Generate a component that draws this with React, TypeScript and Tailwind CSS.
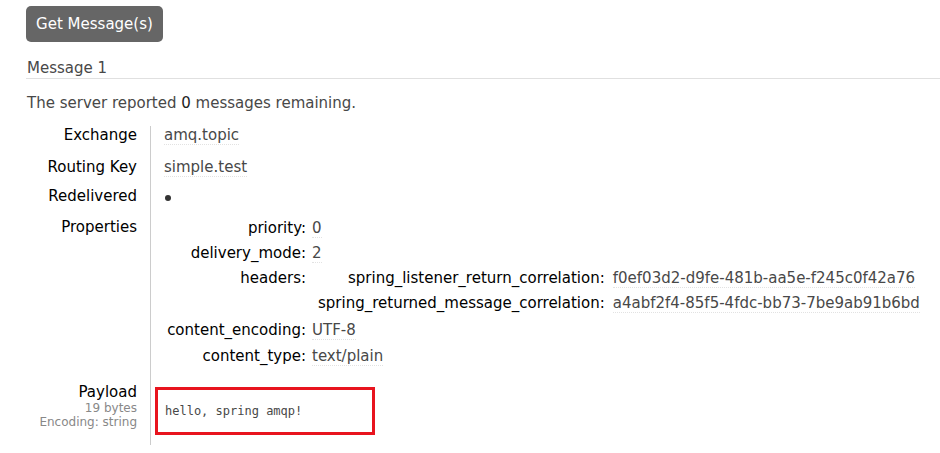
const font = "font-['DejaVu_Sans',Verdana,sans-serif]";

function Val({ children }: { children: React.ReactNode }) {
  return <span className="border-b border-dotted border-[#e2e2e2] text-[#484848]">{children}</span>;
}

export default function App() {
  return (
    <div className={`${font} min-h-[453px] w-[940px] bg-white pl-[26px] text-[15px] leading-[18px] text-[#484848]`}>
      <div className="pt-[6px]">
        <button className="h-[36px] w-[137px] rounded-[5px] bg-[#666] text-[15px] text-white">
          Get Message(s)
        </button>
      </div>
      <div className="mt-[17px] border-b border-[#e0e0e0] pb-px pl-px">Message 1</div>
      <p className="mt-[15px] pl-px">
        The server reported <span className="text-[#222]">0</span> messages remaining.
      </p>
      <div className="mt-[14px] grid grid-cols-[124px_1fr]">
        <div className="flex flex-col items-end pr-[13px] text-black">
          <div className="h-[32px]">Exchange</div>
          <div className="h-[29px]">Routing Key</div>
          <div className="h-[31px]">Redelivered</div>
          <div className="h-[165px]">Properties</div>
          <div>Payload</div>
          <div className="text-[12px] leading-[14px] text-[#888]">19 bytes</div>
          <div className="text-[12px] leading-[14px] text-[#888]">Encoding: string</div>
        </div>
        <div className="border-l border-[#ccc] pb-[10px] pl-[13px]">
          <div className="h-[32px]"><Val>amq.topic</Val></div>
          <div className="h-[29px]"><Val>simple.test</Val></div>
          <div className="flex h-[31px] items-center pb-[9px] pl-[1px]">
            <span className="h-[6px] w-[6px] rounded-full bg-[#333]" />
          </div>
          <div className="grid h-[165px] grid-cols-[142px_1fr] content-start gap-x-[6px] gap-y-[7px] pt-px">
            <div className="text-right text-black">priority:</div>
            <div><Val>0</Val></div>
            <div className="text-right text-black">delivery_mode:</div>
            <div><Val>2</Val></div>
            <div className="text-right text-black">headers:</div>
            <div className="grid grid-cols-[auto_1fr] gap-x-[8px] gap-y-[7px] pl-[6px]">
              <div className="text-right text-black">spring_listener_return_correlation:</div>
              <div><Val>f0ef03d2-d9fe-481b-aa5e-f245c0f42a76</Val></div>
              <div className="text-right text-black">spring_returned_message_correlation:</div>
              <div><Val>a4abf2f4-85f5-4fdc-bb73-7be9ab91b6bd</Val></div>
            </div>
            <div className="mt-[2px] text-right text-black">content_encoding:</div>
            <div className="mt-[2px]"><Val>UTF-8</Val></div>
            <div className="mt-px text-right text-black">content_type:</div>
            <div className="mt-px"><Val>text/plain</Val></div>
          </div>
          <div className="-ml-[9px] mt-[4px] flex h-[48px] w-[220px] items-center border-[3px] border-[#e8141e] pl-[7px] font-['DejaVu_Sans_Mono',monospace] text-[12px] text-[#484848]">
            hello, spring amqp!
          </div>
        </div>
      </div>
    </div>
  );
}
